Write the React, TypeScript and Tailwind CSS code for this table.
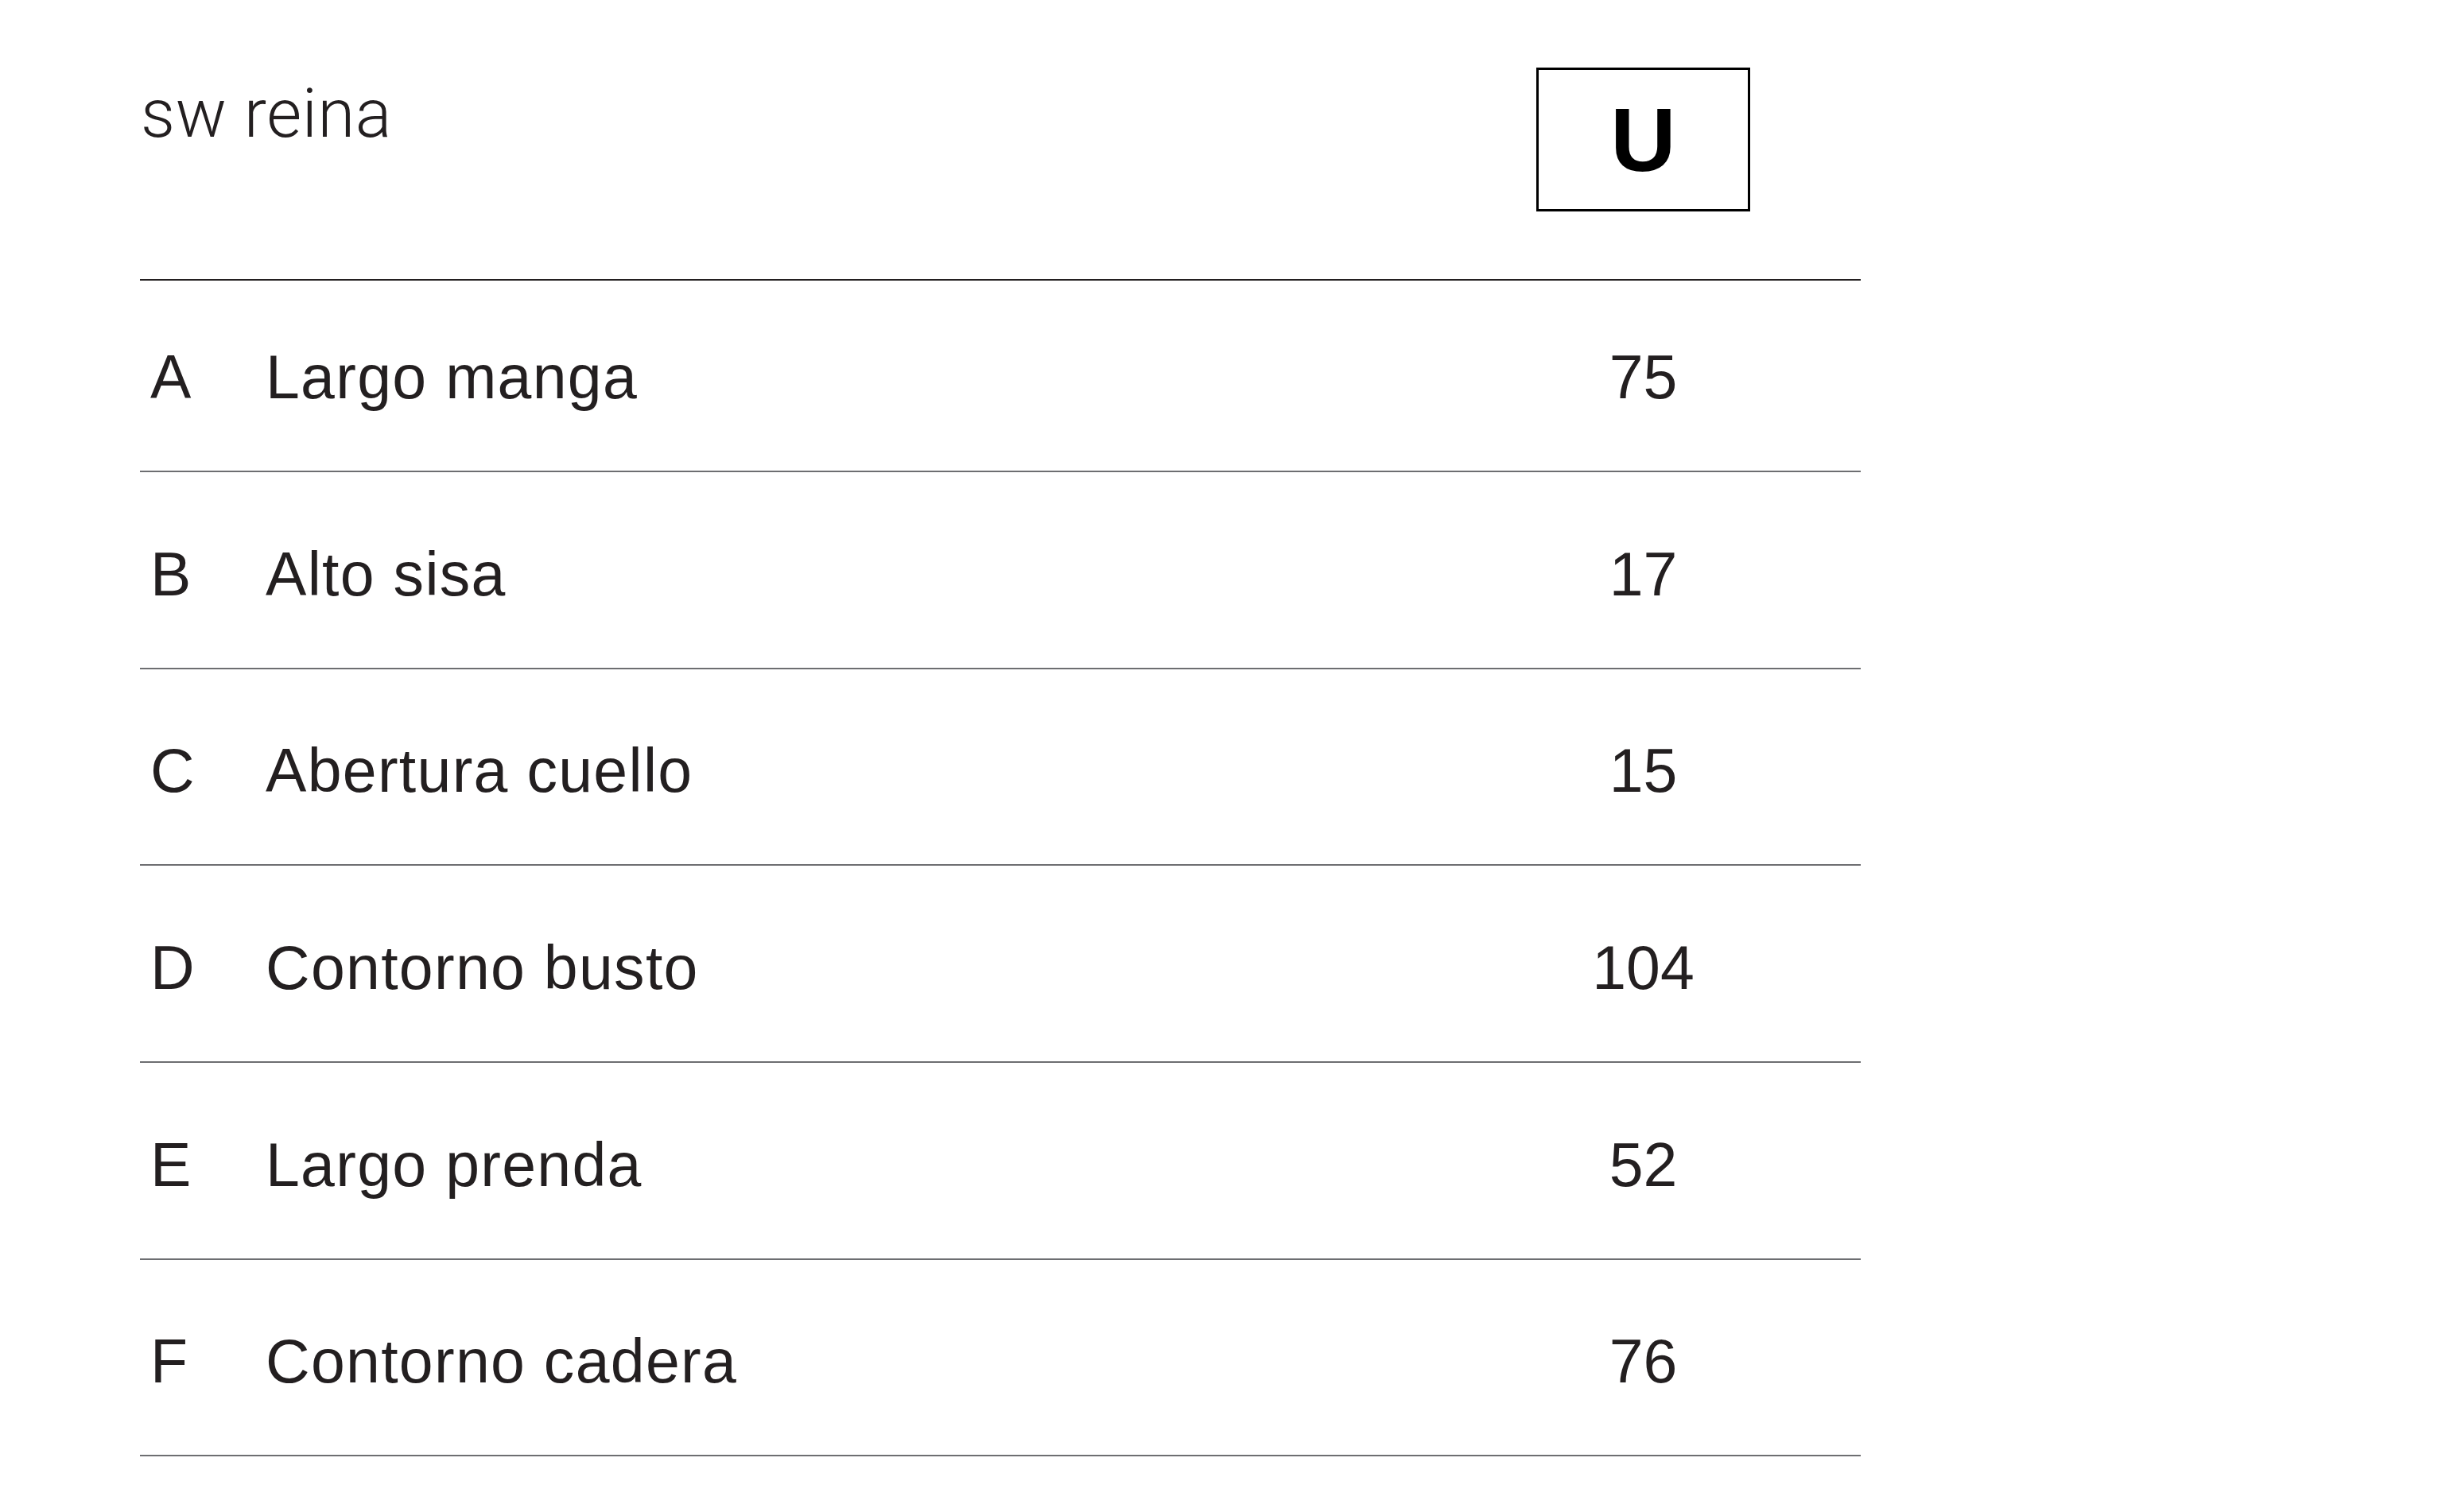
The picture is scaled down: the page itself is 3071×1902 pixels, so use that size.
import React from "react";

const rows = [
  { k: "A", label: "Largo manga", v: "75", h: "h-[239px]" },
  { k: "B", label: "Alto sisa", v: "17", h: "h-[246px]" },
  { k: "C", label: "Abertura cuello", v: "15", h: "h-[245px]" },
  { k: "D", label: "Contorno busto", v: "104", h: "h-[246px]" },
  { k: "E", label: "Largo prenda", v: "52", h: "h-[246px]" },
  { k: "F", label: "Contorno cadera", v: "76", h: "h-[245px]" },
];

export default function App() {
  return (
    <div className="min-h-screen w-full bg-white">
      <div className="ml-[176px] w-[2164px] text-[#231f20]">
        <div className="grid h-[351px] grid-cols-[158px_1598px_269px_139px]">
          <div className="col-span-2 pl-[1px]">
            <div
              className="mt-[101px] text-[85px] font-light leading-none tracking-[0.6px]"
              style={{ fontFamily: "Roboto, 'Liberation Sans', sans-serif" }}
            >
              sw reina
            </div>
          </div>
          <div>
            <div className="mt-[85px] flex h-[181px] items-center justify-center border-[3px] border-black">
              <span
                className="text-[114px] font-bold leading-none text-black"
                style={{ fontFamily: "'Liberation Sans', Arial, sans-serif" }}
              >
                U
              </span>
            </div>
          </div>
          <div />
        </div>
        <div className="h-[2px] bg-[#231f20]" />
        {rows.map((r) => (
          <div key={r.k}>
            <div
              className={`grid grid-cols-[158px_1598px_269px_139px] items-end pb-[79px] text-[77px] leading-none ${r.h}`}
              style={{ fontFamily: "'Liberation Sans', Arial, sans-serif" }}
            >
              <div className="pl-[13px]">{r.k}</div>
              <div className="tracking-[1.3px]">{r.label}</div>
              <div className="text-center">{r.v}</div>
              <div />
            </div>
            <div className="h-[2px] bg-[#6d6e71]" />
          </div>
        ))}
      </div>
    </div>
  );
}
